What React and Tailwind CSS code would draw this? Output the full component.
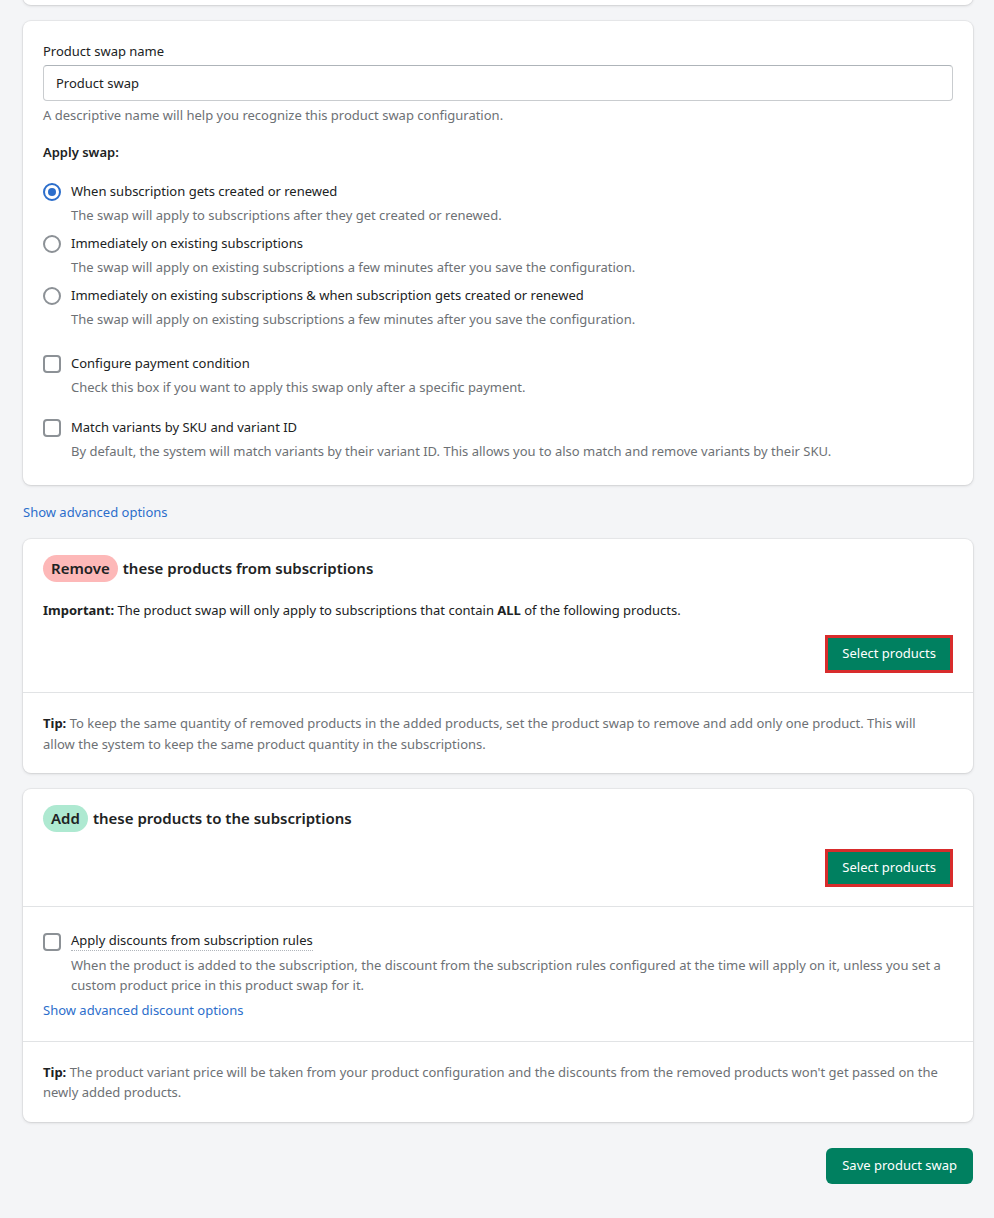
import { useState } from 'react';

const card = 'bg-white rounded-lg shadow-[0_0_0_1px_rgba(63,63,68,0.06),0_1px_3px_rgba(63,63,68,0.16)]';

function Radio({ checked }) {
  return (
    <span className={`mt-[1px] flex h-[18px] w-[18px] shrink-0 items-center justify-center rounded-full border-2 ${checked ? 'border-[#2c6ecb]' : 'border-[#8c9196]'}`}>
      {checked && <span className="h-[8px] w-[8px] rounded-full bg-[#2c6ecb]" />}
    </span>
  );
}

function Check() {
  return <span className="mt-[1px] h-[18px] w-[18px] shrink-0 rounded-[4px] border-2 border-[#8c9196]" />;
}

function Option({ control, label, desc, underline }) {
  return (
    <div>
      <div className="flex items-center gap-[10px] leading-5">
        {control}
        <span className={underline ? 'border-b border-dotted border-[#b0b5bb] leading-[19px]' : ''}>{label}</span>
      </div>
      <div className="mt-1 pl-[28px] leading-5 text-[#6d7175]">{desc}</div>
    </div>
  );
}

function SelectButton() {
  return (
    <div className="flex justify-end">
      <button className="h-[38px] border-[3px] border-[#d82c2c] bg-[#008060] px-[14px] text-[13px] text-white">
        Select products
      </button>
    </div>
  );
}

export default function App() {
  const [name, setName] = useState('Product swap');

  return (
    <div className="min-h-screen bg-[#f4f5f7] px-[23px] pb-[34px] pr-[21px] text-[13px] text-[#202223] font-['Noto_Sans',sans-serif]">
      <div className={`${card} -mt-2 h-[13px] rounded-t-none`} />

      {/* Main settings */}
      <div className={`${card} mt-4 px-5 pb-6 pt-5`}>
        <label className="block leading-5">Product swap name</label>
        <input
          value={name}
          onChange={(e) => setName(e.target.value)}
          className="mt-1 block h-[36px] w-full rounded-[4px] border border-[#c9cccf] border-t-[#aeb4b9] px-3 text-[13px] outline-none"
        />
        <p className="mt-1 leading-5 text-[#6d7175]">A descriptive name will help you recognize this product swap configuration.</p>

        <p className="mt-[17px] font-semibold leading-5">Apply swap:</p>

        <div className="mt-[19px] flex flex-col gap-2">
          <Option control={<Radio checked />} label="When subscription gets created or renewed" desc="The swap will apply to subscriptions after they get created or renewed." />
          <Option control={<Radio />} label="Immediately on existing subscriptions" desc="The swap will apply on existing subscriptions a few minutes after you save the configuration." />
          <Option control={<Radio />} label="Immediately on existing subscriptions & when subscription gets created or renewed" desc="The swap will apply on existing subscriptions a few minutes after you save the configuration." />
        </div>

        <div className="mt-6 flex flex-col gap-5">
          <Option control={<Check />} label="Configure payment condition" desc="Check this box if you want to apply this swap only after a specific payment." />
          <Option control={<Check />} label="Match variants by SKU and variant ID" desc="By default, the system will match variants by their variant ID. This allows you to also match and remove variants by their SKU." />
        </div>
      </div>

      <a className="mt-[17px] block leading-5 text-[#2c6ecb]">Show advanced options</a>

      {/* Remove */}
      <div className={`${card} mt-[17px]`}>
        <div className="px-5 pb-[19px] pt-4">
          <h2 className="flex items-center gap-[5px] text-[15px] font-semibold">
            <span className="flex h-[27px] items-center rounded-full bg-[#fdb8b8] px-2">Remove</span>
            these products from subscriptions
          </h2>
          <p className="mt-[18px] leading-5">
            <b>Important:</b> The product swap will only apply to subscriptions that contain <b>ALL</b> of the following products.
          </p>
          <div className="mt-[15px]">
            <SelectButton />
          </div>
        </div>
        <div className="border-t border-[#e1e3e5] pb-[18px] pl-5 pr-[52px] pt-5 leading-[21px] text-[#6d7175]">
          <b className="text-[#202223]">Tip:</b> To keep the same quantity of removed products in the added products, set the product swap to remove and add only one product. This will allow the system to keep the same product quantity in the subscriptions.
        </div>
      </div>

      {/* Add */}
      <div className={`${card} mt-4`}>
        <div className="px-5 pb-[19px] pt-4">
          <h2 className="flex items-center gap-[5px] text-[15px] font-semibold">
            <span className="flex h-[27px] items-center rounded-full bg-[#aee9d1] px-2">Add</span>
            these products to the subscriptions
          </h2>
          <div className="mt-[17px]">
            <SelectButton />
          </div>
        </div>
        <div className="border-t border-[#e1e3e5] px-5 pb-[21px] pt-6">
          <Option
            control={<Check />}
            underline
            label="Apply discounts from subscription rules"
            desc="When the product is added to the subscription, the discount from the subscription rules configured at the time will apply on it, unless you set a custom product price in this product swap for it."
          />
          <a className="mt-[5px] block leading-5 text-[#2c6ecb]">Show advanced discount options</a>
        </div>
        <div className="border-t border-[#e1e3e5] px-5 pb-5 pt-5 leading-5 text-[#6d7175]">
          <b className="text-[#202223]">Tip:</b> The product variant price will be taken from your product configuration and the discounts from the removed products won't get passed on the newly added products.
        </div>
      </div>

      <div className="mt-[26px] flex justify-end">
        <button className="h-[36px] rounded-md bg-[#008060] px-4 text-[13px] text-white">Save product swap</button>
      </div>
    </div>
  );
}
